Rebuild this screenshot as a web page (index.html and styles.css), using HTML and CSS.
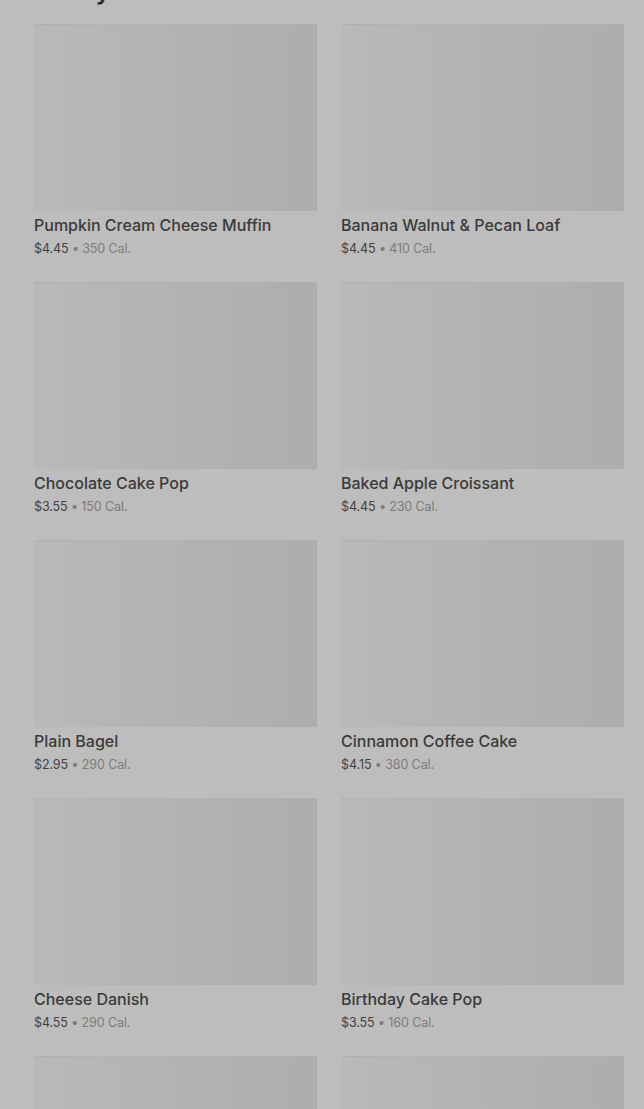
FILE: index.html
```html
<!DOCTYPE html>
<html lang="en">
<head>
<meta charset="utf-8">
<title>Bakery</title>
<link rel="stylesheet" href="styles.css">
</head>
<body>
<main class="page">
  <h2 class="section-title">Bakery</h2>
  <div class="grid">
    <div class="card"><div class="thumb"></div><div class="name">Pumpkin Cream Cheese Muffin</div><div class="meta"><span class="price">$4.45</span> <span class="cal">• 350 Cal.</span></div></div>
    <div class="card"><div class="thumb"></div><div class="name">Banana Walnut &amp; Pecan Loaf</div><div class="meta"><span class="price">$4.45</span> <span class="cal">• 410 Cal.</span></div></div>
    <div class="card"><div class="thumb"></div><div class="name">Chocolate Cake Pop</div><div class="meta"><span class="price">$3.55</span> <span class="cal">• 150 Cal.</span></div></div>
    <div class="card"><div class="thumb"></div><div class="name">Baked Apple Croissant</div><div class="meta"><span class="price">$4.45</span> <span class="cal">• 230 Cal.</span></div></div>
    <div class="card"><div class="thumb"></div><div class="name">Plain Bagel</div><div class="meta"><span class="price">$2.95</span> <span class="cal">• 290 Cal.</span></div></div>
    <div class="card"><div class="thumb"></div><div class="name">Cinnamon Coffee Cake</div><div class="meta"><span class="price">$4.15</span> <span class="cal">• 380 Cal.</span></div></div>
    <div class="card"><div class="thumb"></div><div class="name">Cheese Danish</div><div class="meta"><span class="price">$4.55</span> <span class="cal">• 290 Cal.</span></div></div>
    <div class="card"><div class="thumb"></div><div class="name">Birthday Cake Pop</div><div class="meta"><span class="price">$3.55</span> <span class="cal">• 160 Cal.</span></div></div>
    <div class="card"><div class="thumb"></div></div>
    <div class="card"><div class="thumb"></div></div>
  </div>
</main>
</body>
</html>
```

FILE: styles.css
```css
html, body {
  margin: 0;
  padding: 0;
  background: #bdbdbd;
  overflow: hidden;
}

.page {
  padding: 0 20px 0 34px;
  font-family: Inter, "Noto Sans", sans-serif;
}

.section-title {
  margin: -22px 0 0;
  font-size: 22px;
  line-height: 28px;
  font-weight: 700;
  color: #2e2e2e;
}

.grid {
  margin-top: 18px;
  display: grid;
  grid-template-columns: 283px 283px;
  column-gap: 24px;
  row-gap: 24px;
}

.card {
  display: flex;
  flex-direction: column;
}

.thumb {
  height: 187px;
  background: linear-gradient(90deg, #b9b9b9 0%, #b3b3b3 50%, #adadad 100%);
  box-shadow: inset 0 1px 0 #b1b1b1;
}

.name {
  margin-top: 4px;
  font-size: 16px;
  line-height: 20px;
  font-weight: 500;
  color: #3a3a3a;
  white-space: nowrap;
}

.meta {
  margin-top: 5px;
  font-size: 12.5px;
  line-height: 18px;
  white-space: nowrap;
  letter-spacing: -0.1px;
}

.price {
  color: #424242;
}

.cal {
  color: #7c7c7c;
}
```
